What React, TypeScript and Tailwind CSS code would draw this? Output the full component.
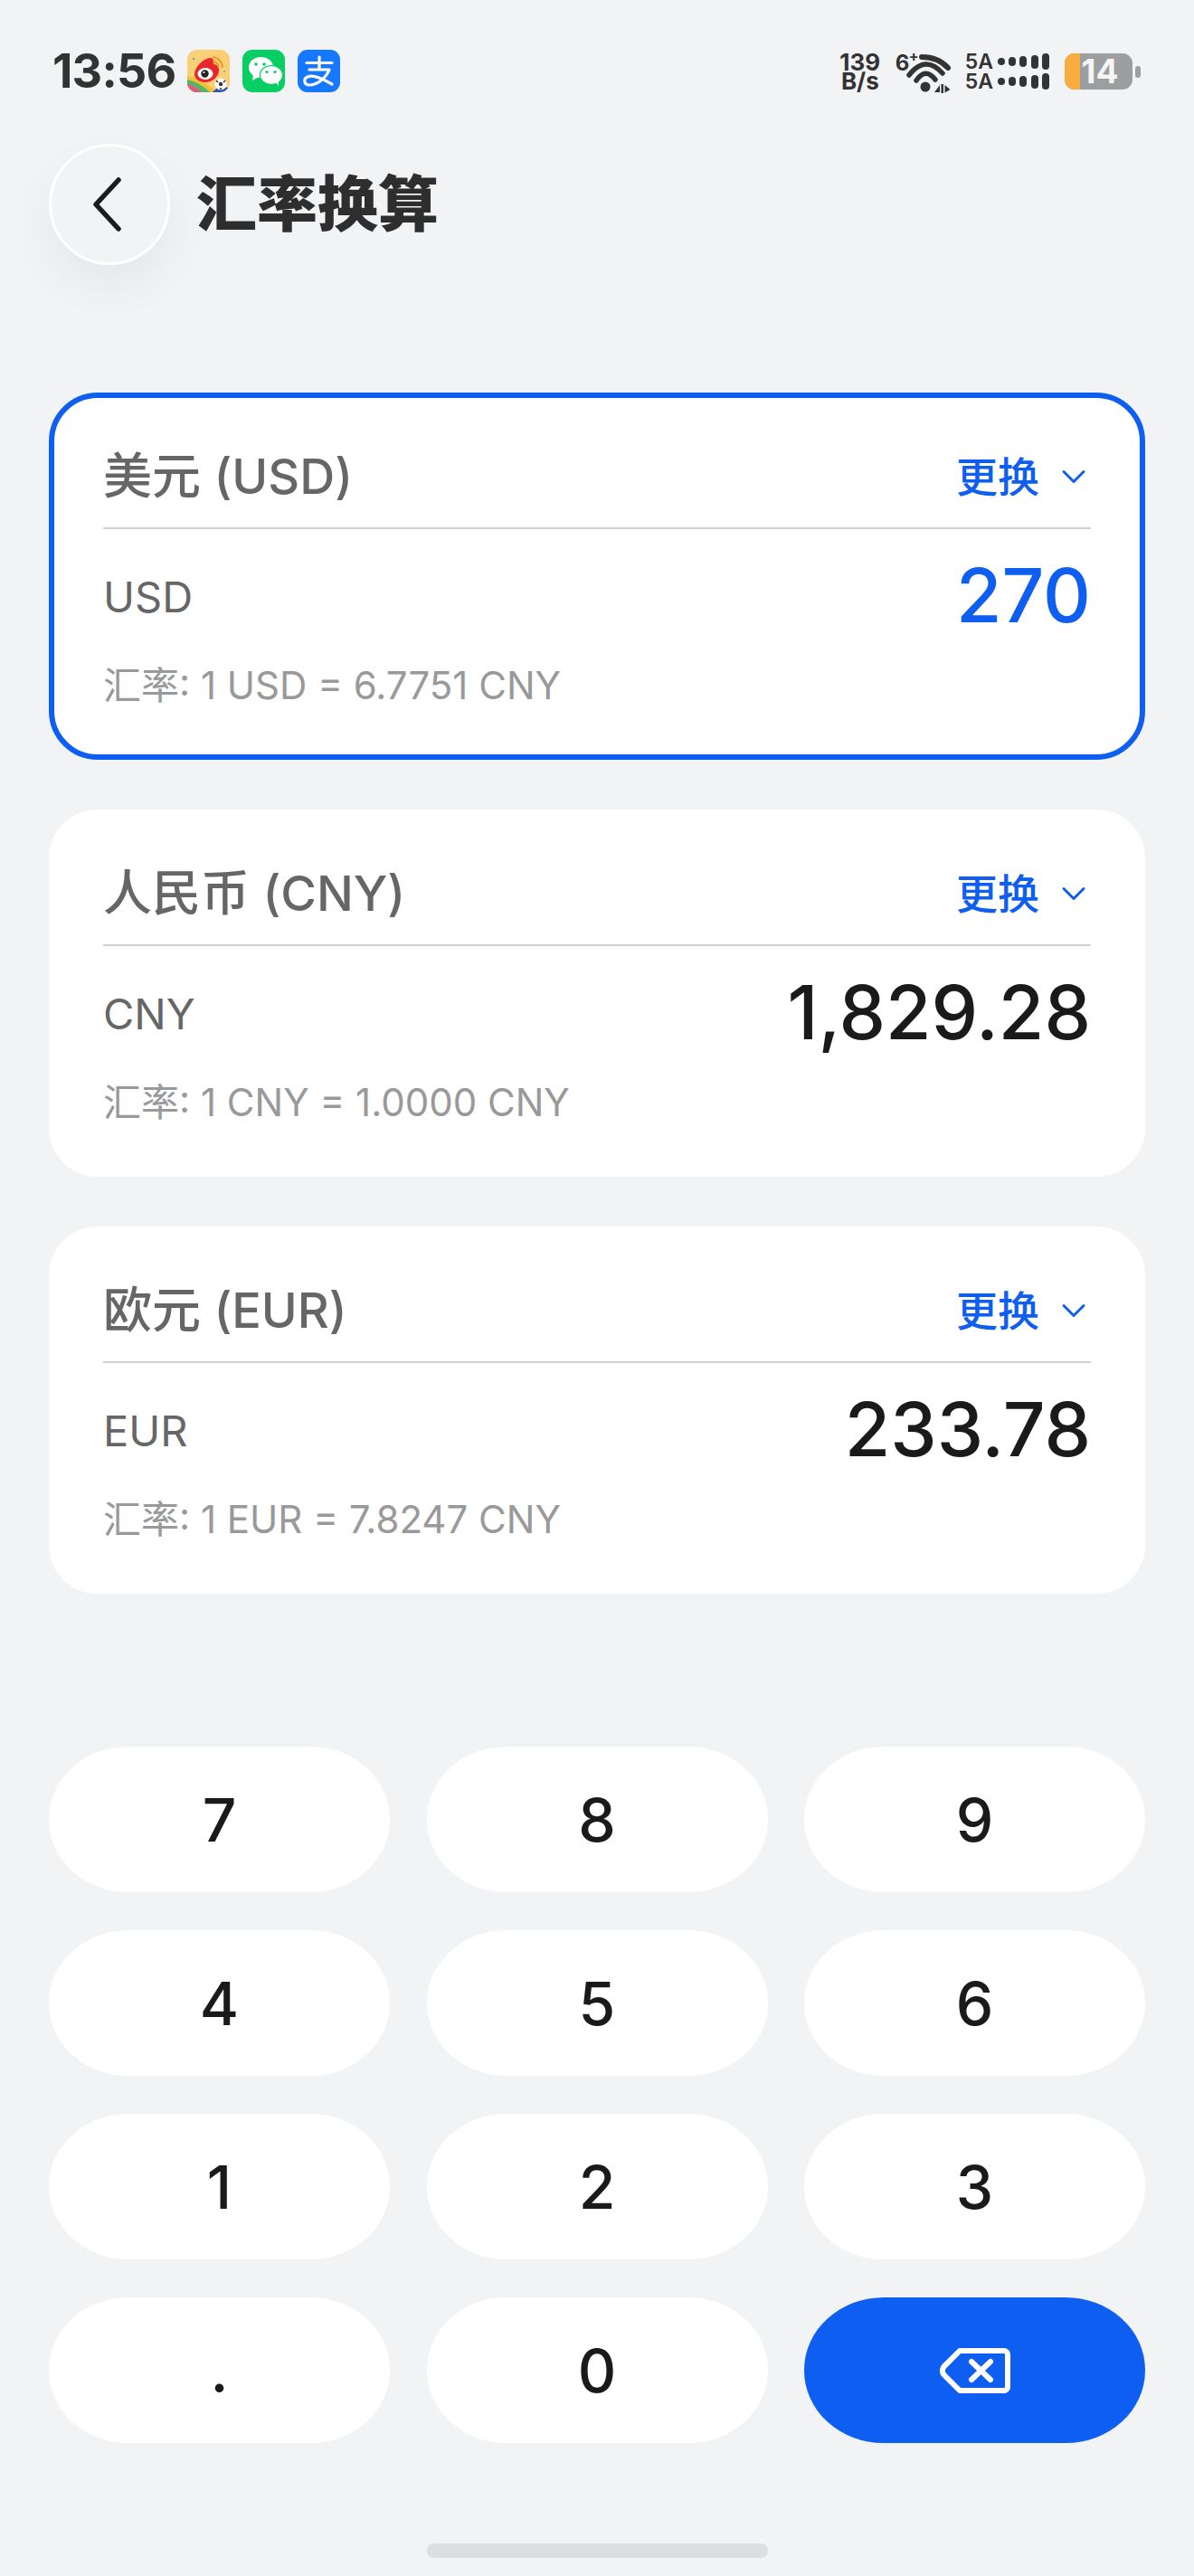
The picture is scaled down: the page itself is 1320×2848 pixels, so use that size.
import { ChevronDown } from 'lucide-react';

const FONT = "font-['Inter','Noto_Sans_CJK_SC',sans-serif]";

const currencies = [
  { title: '美元 (USD)', code: 'USD', value: '270', rate: '汇率: 1 USD = 6.7751 CNY', active: true },
  { title: '人民币 (CNY)', code: 'CNY', value: '1,829.28', rate: '汇率: 1 CNY = 1.0000 CNY', active: false },
  { title: '欧元 (EUR)', code: 'EUR', value: '233.78', rate: '汇率: 1 EUR = 7.8247 CNY', active: false },
];

const keys = ['7', '8', '9', '4', '5', '6', '1', '2', '3', '.', '0'];

function WeiboIcon() {
  return (
    <svg width="47" height="47" viewBox="0 0 47 47">
      <defs>
        <clipPath id="wb">
          <rect width="47" height="47" rx="11" />
        </clipPath>
      </defs>
      <g clipPath="url(#wb)">
        <rect width="47" height="47" fill="#fbcf76" />
        <path d="M0 29c12 3 24 9 33 18H0z" fill="#f0c335" />
        <path d="M0 33c10 2 19 8 25 14H0z" fill="#56b56a" />
        <path d="M0 38c6 1 12 5 15 9H0z" fill="#e6587f" />
        <path d="M28 47l6-6 13 1v5z" fill="#2f55b8" />
      </g>
      <circle cx="7" cy="10" r="1.2" fill="#6f9fb0" />
      <circle cx="41" cy="24" r="1" fill="#6f9fb0" />
      <path d="M8 27c0-7 9-17 17-18 4 0 5 3 4 7 4 0 6 3 6 7 0 7-8 13-15 13-7 0-12-4-12-9z" fill="#e8262c" />
      <ellipse cx="20" cy="26.500" rx="8.500" ry="6.500" fill="#fff" />
      <circle cx="19.500" cy="26.500" r="4.200" fill="#222" />
      <circle cx="18.500" cy="25" r="1.100" fill="#fff" />
      <path d="M29 8c5 1 9 5 10 11M29 13c3 .5 5 3 5.500 5.500" stroke="#ec9a1f" strokeWidth="2" fill="none" strokeLinecap="round" />
      <circle cx="37" cy="38" r="6.500" fill="#fff" />
      <circle cx="37" cy="38" r="2.200" fill="#333" />
      <path d="M32 34l2 2M42 34l-2 2M37 44v-2" stroke="#333" strokeWidth="1.600" />
    </svg>
  );
}

function WechatIcon() {
  return (
    <svg width="47" height="47" viewBox="0 0 47 47">
      <rect width="47" height="47" rx="11" fill="#07cf64" />
      <ellipse cx="20.500" cy="19.500" rx="13.500" ry="11.500" fill="#fff" />
      <path d="M12 27l-1 7 7-4z" fill="#fff" />
      <ellipse cx="32" cy="28" rx="12.500" ry="10.500" fill="#fff" stroke="#07cf64" strokeWidth="1.200" />
      <path d="M37 36l3 4-.5-6z" fill="#fff" />
      <circle cx="15" cy="16" r="1.800" fill="#07cf64" />
      <circle cx="24" cy="16" r="1.800" fill="#07cf64" />
      <circle cx="27" cy="24.500" r="1.600" fill="#07cf64" />
      <circle cx="36" cy="24.500" r="1.600" fill="#07cf64" />
    </svg>
  );
}

function AlipayIcon() {
  return (
    <svg width="47" height="47" viewBox="0 0 47 47">
      <rect width="47" height="47" rx="11" fill="#1677ff" />
      <path d="M24 8v13M10 14.500h28M13 22h22C31 32 21 39 13 39c-6 0-7-7-2-9 7-3 18 3 27 8" stroke="#fff" strokeWidth="3.200" fill="none" strokeLinecap="round" strokeLinejoin="round" />
    </svg>
  );
}

function WifiIcon() {
  return (
    <svg width="61" height="44" viewBox="0 0 61 44">
      <path d="M29 4Q47 4 58 16" stroke="#333" strokeWidth="6" fill="none" strokeLinecap="round" />
      <path d="M15 24Q33 1 52 22" stroke="#333" strokeWidth="5.500" fill="none" strokeLinecap="round" />
      <path d="M23 30Q33 15 44 29" stroke="#333" strokeWidth="5.500" fill="none" strokeLinecap="round" />
      <circle cx="33" cy="37" r="5.500" fill="#333" />
      <path d="M43 43l6-8v8zM50.500 34h2.500v10h-2.500zM54.500 35l6 5-6 3.500z" fill="#333" />
    </svg>
  );
}

function SignalDots() {
  const bars = [8, 10, 12, 15, 18];
  return (
    <div className="flex items-center gap-[4.3px]">
      {bars.map((h, i) => (
        <div key={i} className="w-[8px] rounded-full bg-[#333]" style={{ height: h }} />
      ))}
    </div>
  );
}

function StatusBar() {
  return (
    <div className="flex h-[158px] items-start justify-between pl-[58px] pr-[59px] pt-[55px]">
      <div className="flex items-center">
        <span className="w-[149px] text-[52px] font-bold leading-[47px] tracking-[-0.8px] text-[#333]">13:56</span>
        <div className="flex gap-[14px]">
          <WeiboIcon />
          <WechatIcon />
          <AlipayIcon />
        </div>
      </div>
      <div className="flex items-center pt-[2px] text-[#333]">
        <div className="flex w-[48px] flex-col items-center text-[26px] font-bold leading-[21px]">
          <span>139</span>
          <span>B/s</span>
        </div>
        <div className="relative ml-[15px] h-[44px] w-[61px]">
          <div className="absolute left-0 top-[2px]">
            <WifiIcon />
          </div>
          <span className="absolute left-0 top-[1px] text-[24px] font-bold leading-[24px]">6</span>
          <span className="absolute left-[15px] top-[-3px] text-[16px] font-bold leading-[16px]">+</span>
        </div>
        <div className="ml-[16px] flex flex-col gap-[1px]">
          {[0, 1].map((i) => (
            <div key={i} className="flex items-center gap-[5px]">
              <span className="w-[31px] text-[23px] font-semibold leading-[21px]">5A</span>
              <SignalDots />
            </div>
          ))}
        </div>
        <div className="ml-[17px] flex items-center">
          <div className="relative flex h-[40px] w-[75px] items-center justify-center rounded-[11px] bg-[#9d9e9f]">
            <div className="absolute bottom-0 left-0 top-0 w-[17px] rounded-l-[11px] bg-[#fbac3e]" />
            <span className="relative ml-[3px] text-[37px] font-bold leading-[40px] text-[#f5f5f5]">14</span>
          </div>
          <div className="ml-[3px] h-[13px] w-[6px] rounded-full bg-[#9d9e9f]" />
        </div>
      </div>
    </div>
  );
}

function Header() {
  return (
    <div className="flex h-[135px] items-center pl-[54px]">
      <button className="flex h-[134px] w-[134px] items-center justify-center rounded-full border-[3px] border-white bg-[#f2f3f5] shadow-[0_24px_50px_rgba(0,0,0,0.05)]">
        <svg width="32" height="60" viewBox="0 0 32 60" className="mr-[6px]">
          <path d="M29 3 L4 30 L29 57" stroke="#1c1c1c" strokeWidth="5.500" fill="none" strokeLinecap="round" strokeLinejoin="round" />
        </svg>
      </button>
      <h1 className="ml-[29px] text-[67px] font-black leading-none text-[#2e2e2e]">汇率换算</h1>
    </div>
  );
}

function CurrencyCard({ title, code, value, rate, active }: (typeof currencies)[number]) {
  return (
    <div className={`h-[406px] rounded-[54px] border-[6px] bg-white px-[54px] ${active ? 'border-[#0f5ef2]' : 'border-white'}`}>
      <div className="flex h-[145px] items-center justify-between border-b-2 border-[#d0d0d0] pt-[31px]">
        <span className="text-[54px] font-medium leading-none text-[#666]">{title}</span>
        <button className="flex items-center text-[#0f5ef2]">
          <span className="text-[46px] font-medium leading-none">更换</span>
          <ChevronDown className="ml-[16px] mr-[-3px]" size={44} strokeWidth={1.6} />
        </button>
      </div>
      <div className="flex h-[144px] items-center justify-between pt-[4px]">
        <span className="text-[47px] leading-none text-[#666]">{code}</span>
        <span className={`text-[82px] font-medium leading-none ${active ? 'text-[#0f5ef2]' : 'text-[#1a1a1a]'}`}>{value}</span>
      </div>
      <div className="text-[42px] leading-[58px] text-[#999]">{rate}</div>
    </div>
  );
}

function Keypad() {
  return (
    <div className="grid grid-cols-3 gap-x-[40.5px] gap-y-[42px] px-[54px]">
      {keys.map((key) => (
        <button key={key} className="flex h-[161px] items-center justify-center rounded-[88px/80px] bg-white text-[66px] font-medium leading-none text-[#1a1a1a]">
          {key}
        </button>
      ))}
      <button className="flex h-[161px] items-center justify-center rounded-[88px/80px] bg-[#0f5ef2]">
        <svg width="78" height="50" viewBox="0 0 78 50">
          <path d="M22 3H71a4 4 0 0 1 4 4V43a4 4 0 0 1-4 4H22L5 30a7 7 0 0 1 0-10z" stroke="#fff" strokeWidth="6" fill="none" strokeLinejoin="round" />
          <path d="M35 15L56 35M56 15L35 35" stroke="#fff" strokeWidth="6" fill="none" strokeLinecap="round" />
        </svg>
      </button>
    </div>
  );
}

export default function App() {
  return (
    <div className={`${FONT} flex h-[2848px] w-[1320px] flex-col overflow-hidden bg-[#f2f3f5]`}>
      <StatusBar />
      <Header />
      <div className="mt-[141px] flex flex-col gap-[55px] px-[54px]">
        {currencies.map((c) => (
          <CurrencyCard key={c.code} {...c} />
        ))}
      </div>
      <div className="mt-[169px]">
        <Keypad />
      </div>
      <div className="mx-auto mt-[111px] h-[16px] w-[377px] rounded-full bg-[#dcdee1]" />
    </div>
  );
}
